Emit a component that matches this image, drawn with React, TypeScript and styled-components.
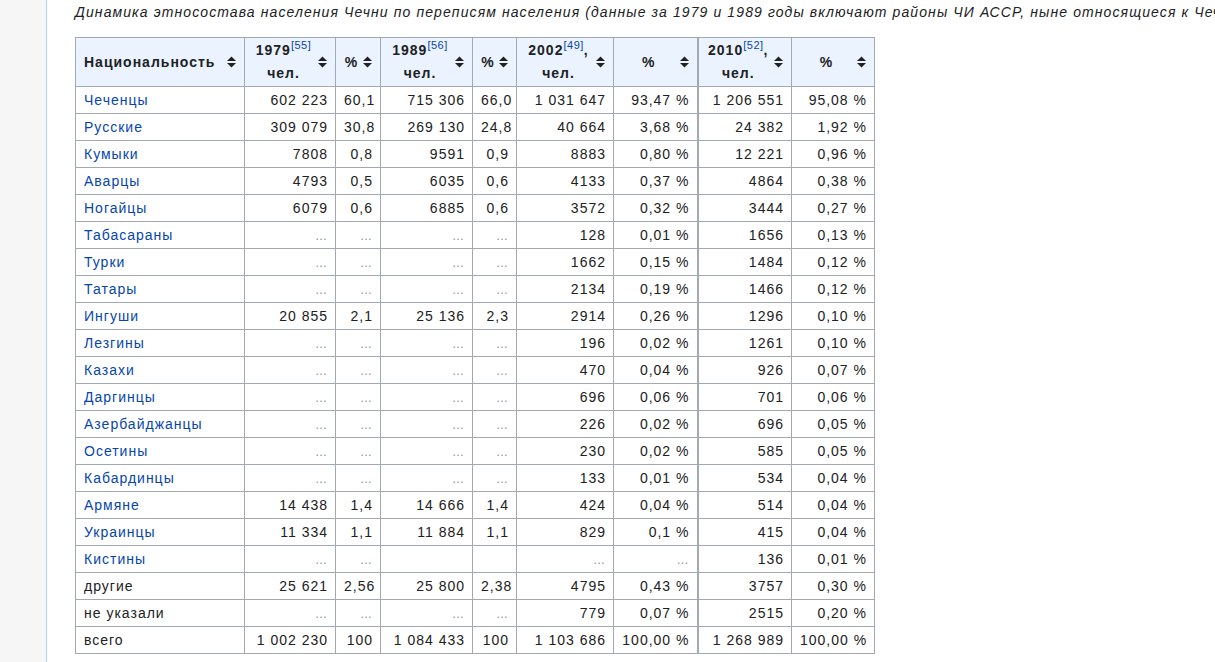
import styled, { createGlobalStyle } from "styled-components";

const GlobalStyle = createGlobalStyle`
  html, body {
    margin: 0;
    height: 100%;
    overflow: hidden;
  }
  body {
    background: #f6f6f6;
    font-family: "Liberation Sans", Arial, sans-serif;
    color: #202122;
    letter-spacing: 1.1px;
  }
`;

type Row = {
  name: string;
  link: boolean;
  values: string[];
};

const D = "…";
const nb = (s: string) => s.replace(/ /g, "\u00a0");

const rows: Row[] = [
  { name: "Чеченцы", link: true, values: ["602 223", "60,1", "715 306", "66,0", "1 031 647", "93,47 %", "1 206 551", "95,08 %"] },
  { name: "Русские", link: true, values: ["309 079", "30,8", "269 130", "24,8", "40 664", "3,68 %", "24 382", "1,92 %"] },
  { name: "Кумыки", link: true, values: ["7808", "0,8", "9591", "0,9", "8883", "0,80 %", "12 221", "0,96 %"] },
  { name: "Аварцы", link: true, values: ["4793", "0,5", "6035", "0,6", "4133", "0,37 %", "4864", "0,38 %"] },
  { name: "Ногайцы", link: true, values: ["6079", "0,6", "6885", "0,6", "3572", "0,32 %", "3444", "0,27 %"] },
  { name: "Табасараны", link: true, values: [D, D, D, D, "128", "0,01 %", "1656", "0,13 %"] },
  { name: "Турки", link: true, values: [D, D, D, D, "1662", "0,15 %", "1484", "0,12 %"] },
  { name: "Татары", link: true, values: [D, D, D, D, "2134", "0,19 %", "1466", "0,12 %"] },
  { name: "Ингуши", link: true, values: ["20 855", "2,1", "25 136", "2,3", "2914", "0,26 %", "1296", "0,10 %"] },
  { name: "Лезгины", link: true, values: [D, D, D, D, "196", "0,02 %", "1261", "0,10 %"] },
  { name: "Казахи", link: true, values: [D, D, D, D, "470", "0,04 %", "926", "0,07 %"] },
  { name: "Даргинцы", link: true, values: [D, D, D, D, "696", "0,06 %", "701", "0,06 %"] },
  { name: "Азербайджанцы", link: true, values: [D, D, D, D, "226", "0,02 %", "696", "0,05 %"] },
  { name: "Осетины", link: true, values: [D, D, D, D, "230", "0,02 %", "585", "0,05 %"] },
  { name: "Кабардинцы", link: true, values: [D, D, D, D, "133", "0,01 %", "534", "0,04 %"] },
  { name: "Армяне", link: true, values: ["14 438", "1,4", "14 666", "1,4", "424", "0,04 %", "514", "0,04 %"] },
  { name: "Украинцы", link: true, values: ["11 334", "1,1", "11 884", "1,1", "829", "0,1 %", "415", "0,04 %"] },
  { name: "Кистины", link: true, values: [D, D, "", "", D, D, "136", "0,01 %"] },
  { name: "другие", link: false, values: ["25 621", "2,56", "25 800", "2,38", "4795", "0,43 %", "3757", "0,30 %"] },
  { name: "не указали", link: false, values: [D, D, D, D, "779", "0,07 %", "2515", "0,20 %"] },
  { name: "всего", link: false, values: ["1 002 230", "100", "1 084 433", "100", "1 103 686", "100,00 %", "1 268 989", "100,00 %"] },
];

const widths = [169, 91, 45, 92, 44, 97, 84, 94, 83];

const SortIcon = () => (
  <SortSvg width="9" height="12" viewBox="0 0 9 12">
    <polygon points="0,5 4.5,0.5 9,5" fill="#202122" />
    <polygon points="0,7 4.5,11.5 9,7" fill="#202122" />
  </SortSvg>
);

const App = () => {
  return (
    <>
      <GlobalStyle />
      <Page>
        <Sidebar />
        <Content>
          <Caption>
            Динамика этносостава населения Чечни по переписям населения (данные за 1979 и 1989 годы
            включают районы ЧИ АССР, ныне относящиеся к Чечне)
          </Caption>
          <Table>
            <colgroup>
              {widths.map((w, i) => (
                <col key={i} style={{ width: w }} />
              ))}
            </colgroup>
            <thead>
              <tr>
                <HeadCell>
                  <HeadInner>
                    <HeadText $left>Национальность</HeadText>
                    <SortIcon />
                  </HeadInner>
                </HeadCell>
                <HeadCell>
                  <HeadInner>
                    <HeadText>
                      1979<Ref>[55]</Ref>
                      <br />
                      чел.
                    </HeadText>
                    <SortIcon />
                  </HeadInner>
                </HeadCell>
                <HeadCell>
                  <HeadInner>
                    <HeadText>%</HeadText>
                    <SortIcon />
                  </HeadInner>
                </HeadCell>
                <HeadCell>
                  <HeadInner>
                    <HeadText>
                      1989<Ref>[56]</Ref>
                      <br />
                      чел.
                    </HeadText>
                    <SortIcon />
                  </HeadInner>
                </HeadCell>
                <HeadCell>
                  <HeadInner>
                    <HeadText>%</HeadText>
                    <SortIcon />
                  </HeadInner>
                </HeadCell>
                <HeadCell>
                  <HeadInner>
                    <HeadText>
                      2002<Ref>[49]</Ref>,
                      <br />
                      чел.
                    </HeadText>
                    <SortIcon />
                  </HeadInner>
                </HeadCell>
                <HeadCell>
                  <HeadInner>
                    <HeadText>%</HeadText>
                    <SortIcon />
                  </HeadInner>
                </HeadCell>
                <HeadCell $thick>
                  <HeadInner>
                    <HeadText>
                      2010<Ref>[52]</Ref>,
                      <br />
                      чел.
                    </HeadText>
                    <SortIcon />
                  </HeadInner>
                </HeadCell>
                <HeadCell>
                  <HeadInner>
                    <HeadText>%</HeadText>
                    <SortIcon />
                  </HeadInner>
                </HeadCell>
              </tr>
            </thead>
            <tbody>
              {rows.map((r) => (
                <tr key={r.name}>
                  <NameCell>{r.link ? <NameLink href="#">{r.name}</NameLink> : r.name}</NameCell>
                  {r.values.map((v, i) => (
                    <NumCell key={i} $thick={i === 6}>
                      {v === D ? <Dots>{D}</Dots> : nb(v)}
                    </NumCell>
                  ))}
                </tr>
              ))}
            </tbody>
          </Table>
        </Content>
      </Page>
    </>
  );
};

export default App;

const Page = styled.div`
  display: flex;
  min-height: 662px;
`;

const Sidebar = styled.div`
  width: 46px;
  flex-shrink: 0;
  background: #f6f6f6;
`;

const Content = styled.main`
  flex: 1;
  min-width: 0;
  background: #ffffff;
  border-left: 1px solid #a7d7f9;
  padding: 2px 0 0 28px;
`;

const Caption = styled.div`
  font-size: 14px;
  font-style: italic;
  line-height: 20px;
  white-space: nowrap;
  margin-bottom: 15px;
`;

const Table = styled.table`
  border-collapse: collapse;
  table-layout: fixed;
  width: 800px;
  font-size: 14px;
  background: #ffffff;
  border: 1px solid #a2a9b1;
  letter-spacing: 1px;
`;

const HeadCell = styled.th<{ $thick?: boolean }>`
  height: 48px;
  padding: 0 8px;
  background: #eaf3ff;
  border: 1px solid #a2a9b1;
  border-left-width: ${(p) => (p.$thick ? "2px" : "1px")};
  font-weight: bold;
  vertical-align: middle;
`;

const HeadInner = styled.div`
  display: flex;
  align-items: center;
  gap: 4px;
`;

const HeadText = styled.div<{ $left?: boolean }>`
  flex: 1;
  text-align: ${(p) => (p.$left ? "left" : "center")};
  line-height: 23px;
  white-space: nowrap;
`;

const Ref = styled.sup`
  font-size: 11px;
  font-weight: normal;
  color: #0645ad;
  line-height: 0;
  vertical-align: super;
  letter-spacing: 0.5px;
`;

const SortSvg = styled.svg`
  flex-shrink: 0;
  display: block;
`;

const NameCell = styled.td`
  height: 26px;
  padding: 0 8px;
  line-height: 18px;
  border: 1px solid #a2a9b1;
  text-align: left;
  white-space: nowrap;
`;

const NameLink = styled.a`
  color: #0645ad;
  text-decoration: none;
`;

const NumCell = styled.td<{ $thick?: boolean }>`
  height: 26px;
  padding: 0 7px 0 8px;
  line-height: 18px;
  border: 1px solid #a2a9b1;
  border-left-width: ${(p) => (p.$thick ? "2px" : "1px")};
  text-align: right;
  white-space: nowrap;
`;

const Dots = styled.span`
  color: #8a8f96;
  font-size: 12px;
`;
